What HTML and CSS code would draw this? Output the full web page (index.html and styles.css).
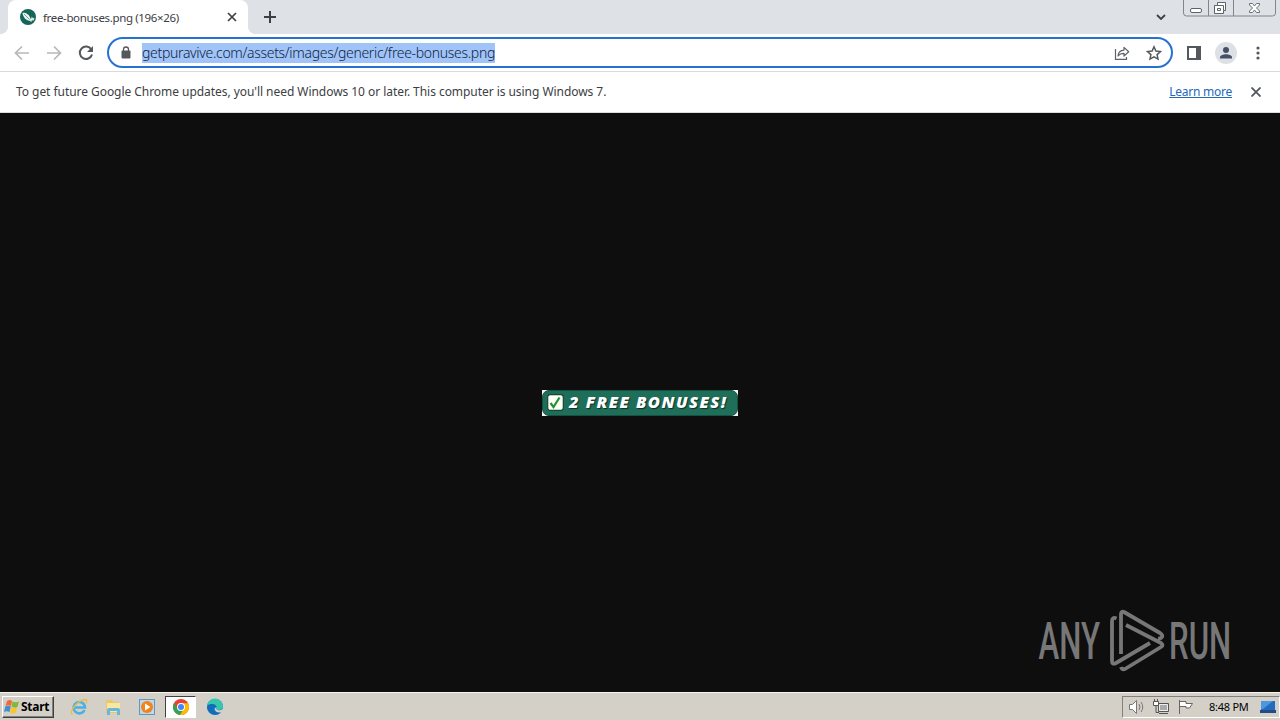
FILE: index.html
```
<!DOCTYPE html>
<html lang="en">
<head>
    <meta charset="UTF-8">
    <meta name="viewport" content="width=device-width, initial-scale=1.0">
    <title>free-bonuses.png (196×26)</title>
    <link rel="stylesheet" href="styles.css">
</head>
<body>
    <div class="tab-strip">
        <div class="tab">
            <svg class="favicon" width="16" height="16" viewBox="0 0 16 16">
                <circle cx="8" cy="8" r="8" fill="#176558"/>
                <path d="M2.500 4c4-1 7 2 8.500 8C7 12 3 9 2.500 4z" fill="#e9f4ef"/>
                <path d="M4 5l7 7" fill="none" stroke="#6ba595"/>
                <path d="M8 6l3 6 1-3 1 2 1-2" fill="none" stroke="#e9f4ef" stroke-width="1.200"/>
            </svg>
            <span class="tab-title">free-bonuses.png (196×26)</span>
            <svg class="tab-close" width="10" height="10" viewBox="0 0 10 10"><path d="M1 1l8 8M9 1L1 9" stroke="#3c4043" stroke-width="1.7"/></svg>
        </div>
        <svg class="new-tab" width="12" height="12" viewBox="0 0 12 12"><path d="M6 0v12M0 6h12" stroke="#3c4043" stroke-width="2"/></svg>
        <svg class="tab-search" width="10" height="6" viewBox="0 0 10 6"><path d="M1 1l4 4 4-4" fill="none" stroke="#3c4043" stroke-width="1.8"/></svg>
        <svg class="window-buttons" width="93" height="17" viewBox="0 0 93 17" fill="none">
            <path d="M.5 0v13q0 3 3 3h86q3 0 3-3V0M25.500 0v16M50.500 0v16" stroke="#80868e"/>
            <rect x="7.500" y="8.500" width="11" height="4" rx="1.500" fill="#fff" stroke="#5f6368"/>
            <path d="M34.500 2.500h8v8h-2v3h-9v-8h3z" fill="#fff" stroke="#5f6368"/>
            <path d="M34.500 5.500h6v5M34.500 8.500h3v2h-3z" stroke="#5f6368"/>
            <path d="M66.500 3.500h3l2 2.500 2-2.500h3v1.500L73.500 8l3 3v1.500h-3l-2-2.500-2 2.500h-3V11l3-3-3-3z" fill="#fff" stroke="#6b7076"/>
        </svg>
    </div>

    <div class="toolbar">
        <svg class="nav-icon" width="16" height="16" viewBox="0 0 16 16" fill="none" stroke="#b6b8bb" stroke-width="1.700"><path d="M15 8H2M8 1.500L1.500 8 8 14.500"/></svg>
        <svg class="nav-icon" width="16" height="16" viewBox="0 0 16 16" fill="none" stroke="#b6b8bb" stroke-width="1.700"><path d="M1 8h13M8 1.500L14.500 8 8 14.500"/></svg>
        <svg class="nav-icon" width="16" height="16" viewBox="0 0 16 16"><path d="M13.300 4.500A6.200 6.200 0 1 0 14 9.500" fill="none" stroke="#54585d" stroke-width="2"/><path d="M15 1v6H9z" fill="#54585d"/></svg>
        <div class="omnibox">
            <svg class="lock" width="10" height="13" viewBox="0 0 10 13"><rect x="0.500" y="4.500" width="9" height="8" rx="1" fill="#54585d"/><path d="M2.500 5V3.500a2.500 2.500 0 0 1 5 0V5" fill="none" stroke="#54585d" stroke-width="1.300"/></svg>
            <span class="url">getpuravive.com/assets/images/generic/free-bonuses.png</span>
            <svg class="share" width="16" height="14" viewBox="0 0 16 14" fill="none" stroke="#5f6368" stroke-width="1.200"><path d="M1.500 3v10.300h11V11"/><path d="M4 10c.4-4 2.500-5.700 6-5.900V1.400L14.700 5.800 10 10V7.300C7.300 7.300 5.500 8 4 10z" stroke-linejoin="round"/></svg>
            <svg class="star" width="16" height="16" viewBox="0 0 16 16"><path d="M8 1.800l1.900 4.200 4.600.5-3.400 3.100.9 4.500L8 11.800l-4 2.300.9-4.500L1.500 6.500 6.100 6z" fill="none" stroke="#54585d" stroke-width="1.500"/></svg>
        </div>
        <svg class="side-panel" width="14" height="14" viewBox="0 0 14 14"><path d="M1 1h12v12H1z" fill="#fff" stroke="#54585d" stroke-width="2"/><path d="M9 1h4v12H9z" fill="#54585d"/></svg>
        <svg class="profile" width="22" height="22" viewBox="0 0 22 22"><circle cx="11" cy="11" r="11" fill="#dde1e6"/><circle cx="11" cy="8" r="3" fill="#474f68"/><path d="M5 16.500v-1.200c0-2 3.500-3 6-3s6 1 6 3v1.200z" fill="#474f68"/></svg>
        <svg class="menu" width="4" height="14" viewBox="0 0 4 14" fill="#54585d"><circle cx="2" cy="2" r="1.600"/><circle cx="2" cy="7" r="1.600"/><circle cx="2" cy="12" r="1.600"/></svg>
    </div>

    <div class="infobar">
        <span class="info-text">To get future Google Chrome updates, you'll need Windows 10 or later. This computer is using Windows 7.</span>
        <a class="learn-more">Learn more</a>
        <svg width="10" height="10" viewBox="0 0 10 10"><path d="M.5.5l9 9M9.500.5l-9 9" stroke="#54585d" stroke-width="1.800"/></svg>
    </div>

    <div class="viewer">
        <div class="image">
            <div class="banner">
                <svg width="17" height="17" viewBox="0 0 17 17"><rect x=".7" y=".7" width="15.600" height="15.600" rx="2.500" fill="#fffff4" stroke="#144735" stroke-width="1.200"/><path d="M3.500 9l3 4 6-9.500" fill="none" stroke="#23913b" stroke-width="2.200"/></svg>
                <span class="banner-text">2 FREE BONUSES!</span>
            </div>
        </div>
        <svg class="watermark" width="194" height="64" viewBox="0 0 194 64">
            <g class="watermark-text">
                <text transform="translate(.5 50) scale(.6 1)">ANY</text>
                <text transform="translate(131 50) scale(.6 1)">RUN</text>
            </g>
            <g fill="none" stroke="#777" stroke-width="3.800" stroke-linejoin="round">
                <path d="M78.500 9.500q-4.500-2-4.500 3V52q0 4 4 2l34-20"/>
                <path d="M83 45V5q0-3 3-2l36 21q3 2 2 4t-4 1"/>
                <path d="M88 16l35 18q3 2 0 4L87 60q-3 1-4-2"/>
            </g>
        </svg>
    </div>

    <div class="taskbar">
        <div class="start">
            <svg width="17" height="16" viewBox="0 0 17 16"><path d="M3 2q3-2 5 0L7 7Q4 5.500 1.500 7z" fill="#ef6a3b"/><path d="M8.500 2.500q3 1.500 6.500 0L13.500 8q-3 1.500-6-.5z" fill="#83b83b"/><path d="M1.300 7.500q3-1.500 5.500 0l-1.300 5.500q-3-1.500-5.500 0z" fill="#408fd0"/><path d="M7.300 8.200q3 1.500 5.900.3l-1.500 5.300q-2.500 1.500-5.700-.3z" fill="#f7c52e"/></svg>
            <span>Start</span>
        </div>
        <svg class="task-icon" width="18" height="18" viewBox="0 0 18 18"><path d="M14.500 12A5.700 5.700 0 1 1 15 9.500H5" fill="none" stroke="#4bb0e6" stroke-width="2.500"/><path d="M2.500 16.500C-2 14 8 2 15.500 1.500q2.500.5.500 4" fill="none" stroke="#e7bd45" stroke-width="1.300"/></svg>
        <svg class="task-icon" width="18" height="18" viewBox="0 0 18 18"><path d="M2 2h6l1 2h6v11H2z" fill="#e9c866"/><path d="M3 5h13v9H3z" fill="#f8e7a4"/><path d="M3 17v-5q0-2 2-2h9q2 0 2 2v5h-3v-4H6v4z" fill="#69b6dc"/></svg>
        <svg class="task-icon" width="18" height="18" viewBox="0 0 18 18"><rect x="1.500" y="1.500" width="15" height="15" fill="#b8d9ef" stroke="#6497bc"/><circle cx="9" cy="9" r="6" fill="#f58216"/><path d="M7 5.500v7L12.500 9z" fill="#fff"/></svg>
        <div class="task-active">
            <svg width="16" height="16" viewBox="0 0 16 16"><circle cx="8" cy="8" r="8" fill="#e94235"/><path d="M1.100 4A8 8 0 0 0 7 16L10.500 10H4.500z" fill="#34a353"/><path d="M15 4.200A8 8 0 0 1 7 16l4.500-7.500L8 4.200z" fill="#fbbc05"/><circle cx="8" cy="8" r="4" fill="#fff"/><circle cx="8" cy="8" r="3" fill="#4285f4"/></svg>
        </div>
        <svg class="task-icon edge" width="18" height="18" viewBox="0 0 18 18"><circle cx="9" cy="9" r="8" fill="#1479c9"/><path d="M1 9a8 8 0 0 1 16-1c0 3-2 4-5 4-2 0-2-1-1.300-2C11.500 7 5 4 1 9z" fill="#38c5ae"/><path d="M1.200 8C4 4.500 10 6 10.500 9 8 8 6 10 8 13c2 2 5 2 7.500.5A8 8 0 0 1 1.200 8z" fill="#126cb8"/><path d="M10.500 9q-1 3 2 3.200 3 .2 4-1.500l1 2-2 1.500q-5 1-6.500-2-1-2 1.500-3.200z" fill="#d4d0c8"/></svg>
        <div class="tray">
            <svg width="18" height="16" viewBox="0 0 18 16" fill="none" stroke="#777"><path d="M1.500 5.500h3l4-4v13l-4-4h-3z" fill="#fff"/><path d="M11 5q2 3 0 6M13 3q3.500 5 0 10"/></svg>
            <svg width="17" height="16" viewBox="0 0 17 16" fill="none" stroke="#555"><path d="M5.500 4.500h10v8h-10z" fill="#aaa"/><path d="M6.500 5.500h8v6h-8z" stroke="#eee"/><path d="M6 14.500h9"/><path d="M.5 2.500h5v4h-5z" fill="#fff"/><path d="M1.500 0v3M4.500 0v3M3 7v6.500h3"/></svg>
            <svg width="17" height="16" viewBox="0 0 17 16"><path d="M2.500 1v14M3 2.500h6v2h6.500L12.500 9H9V7.500H3" fill="#fff" stroke="#666"/></svg>
            <span class="clock">8:48 PM</span>
            <svg class="desktop" width="16" height="14" viewBox="0 0 16 14"><path d="M1 1h14v9H1z" fill="#246bc0"/><path d="M1 1h12L3 9H1z" fill="#4c98df"/><path d="M0 10h16v3H0z" fill="#234b86"/></svg>
        </div>
    </div>
</body>
</html>
```
FILE: styles.css
```
* {
    box-sizing: border-box;
}

body {
    margin: 0;
    width: 1280px;
    height: 720px;
    display: flex;
    flex-direction: column;
    overflow: hidden;
    background-color: #0e0e0e;
    font-family: "Noto Sans", sans-serif;
    color: #3c4043;
    white-space: nowrap;
}

svg {
    display: block;
    flex: none;
}

.tab-strip {
    height: 34px;
    display: flex;
    align-items: center;
    padding-left: 8px;
    background-color: #dee1e6;
}

.tab {
    position: relative;
    width: 240px;
    height: 34px;
    display: flex;
    align-items: center;
    padding: 0 11px 0 12px;
    background-color: #fff;
    border-radius: 8px 8px 0 0;
}

/* rounded feet of the active tab */
.tab::before,
.tab::after {
    content: "";
    position: absolute;
    bottom: 0;
    left: -8px;
    width: 8px;
    height: 8px;
    background: radial-gradient(circle at 0 0, transparent 8px, #fff 8px);
}

.tab::after {
    left: 240px;
    background: radial-gradient(circle at 100% 0, transparent 8px, #fff 8px);
}

.tab-title {
    margin-left: 7px;
    font-size: 11.5px;
    letter-spacing: -0.35px;
}

.tab-close {
    margin-left: auto;
}

.new-tab {
    margin-left: 16px;
}

.tab-search {
    margin-left: auto;
}

.window-buttons {
    align-self: flex-start;
    margin: 0 4px 0 17px;
}

.toolbar {
    height: 38px;
    display: flex;
    align-items: center;
    padding-left: 14px;
    background-color: #fff;
    border-bottom: 1px solid #d9dadd;
}

.nav-icon {
    margin-right: 16px;
}

.nav-icon + .nav-icon + .nav-icon {
    margin-right: 13px;
}

.omnibox {
    width: 1066px;
    height: 31px;
    display: flex;
    align-items: center;
    padding: 0 9px 0 12px;
    border: 2px solid #2572d0;
    border-radius: 16px;
}

.url {
    margin-left: 11px;
    height: 20px;
    line-height: 20px;
    font-size: 14px;
    font-weight: 300;
    letter-spacing: -0.32px;
    background-color: #a0c4f8;
    color: #10233f;
}

.share {
    margin-left: auto;
}

.star {
    margin-left: 16px;
}

.side-panel {
    margin-left: 14px;
}

.profile {
    margin-left: 14px;
}

.menu {
    margin-left: 19px;
}

.infobar {
    height: 41px;
    display: flex;
    align-items: center;
    padding: 0 19px 1px 16px;
    background-color: #fff;
    border-bottom: 1px solid #ddd;
    font-size: 12px;
    letter-spacing: -0.05px;
}

.learn-more {
    margin-left: auto;
    margin-right: 19px;
    letter-spacing: -0.25px;
    color: #2368bd;
    text-decoration: underline;
}

.viewer {
    position: relative;
    height: 579px;
    display: flex;
    align-items: center;
    justify-content: center;
}

.image {
    width: 196px;
    height: 26px;
    background-color: #f4f4f4;
}

.banner {
    height: 26px;
    display: flex;
    align-items: center;
    padding-left: 4px;
    background-color: #1f6e5a;
    border: 1px solid #174f40;
    border-radius: 7px;
}

.banner-text {
    margin: -2px 0 0 5px;
    font-family: "Open Sans", sans-serif;
    font-size: 16.5px;
    font-weight: 800;
    font-style: italic;
    letter-spacing: 1.45px;
    color: #fff;
    text-shadow: 1px 1px 1px #0c2f26;
}

.watermark {
    position: absolute;
    left: 1038px;
    top: 496px;
}

.watermark-text {
    font-family: Roboto, sans-serif;
    font-size: 52px;
    font-weight: 500;
    fill: #777;
}

.taskbar {
    height: 28px;
    display: flex;
    align-items: center;
    padding-left: 2px;
    background-color: #d4d0c8;
    border-top: 1px solid #f5f4f0;
}

.start {
    width: 52px;
    height: 22px;
    display: flex;
    align-items: center;
    padding-left: 1px;
    border: 1px solid;
    border-color: #fff #404040 #404040 #fff;
    box-shadow: inset -1px -1px #808080;
    font-size: 12px;
    font-weight: bold;
    letter-spacing: -0.25px;
    color: #000;
}

.task-icon {
    margin-left: 16px;
}

.task-active {
    width: 31px;
    height: 22px;
    display: flex;
    align-items: center;
    justify-content: center;
    margin-left: 9px;
    background-color: #fff;
    border: 1px solid;
    border-color: #404040 #fff #fff #404040;
}

.edge {
    margin-left: 10px;
}

.tray {
    width: 158px;
    height: 22px;
    display: flex;
    align-items: center;
    margin-left: auto;
    padding-left: 5px;
    gap: 7px;
    border: 1px solid;
    border-color: #808080 #fff #fff #808080;
}

.clock {
    margin-left: 8px;
    font-size: 11px;
    letter-spacing: -0.25px;
    color: #000;
}

.desktop {
    margin-left: 4px;
}
```
